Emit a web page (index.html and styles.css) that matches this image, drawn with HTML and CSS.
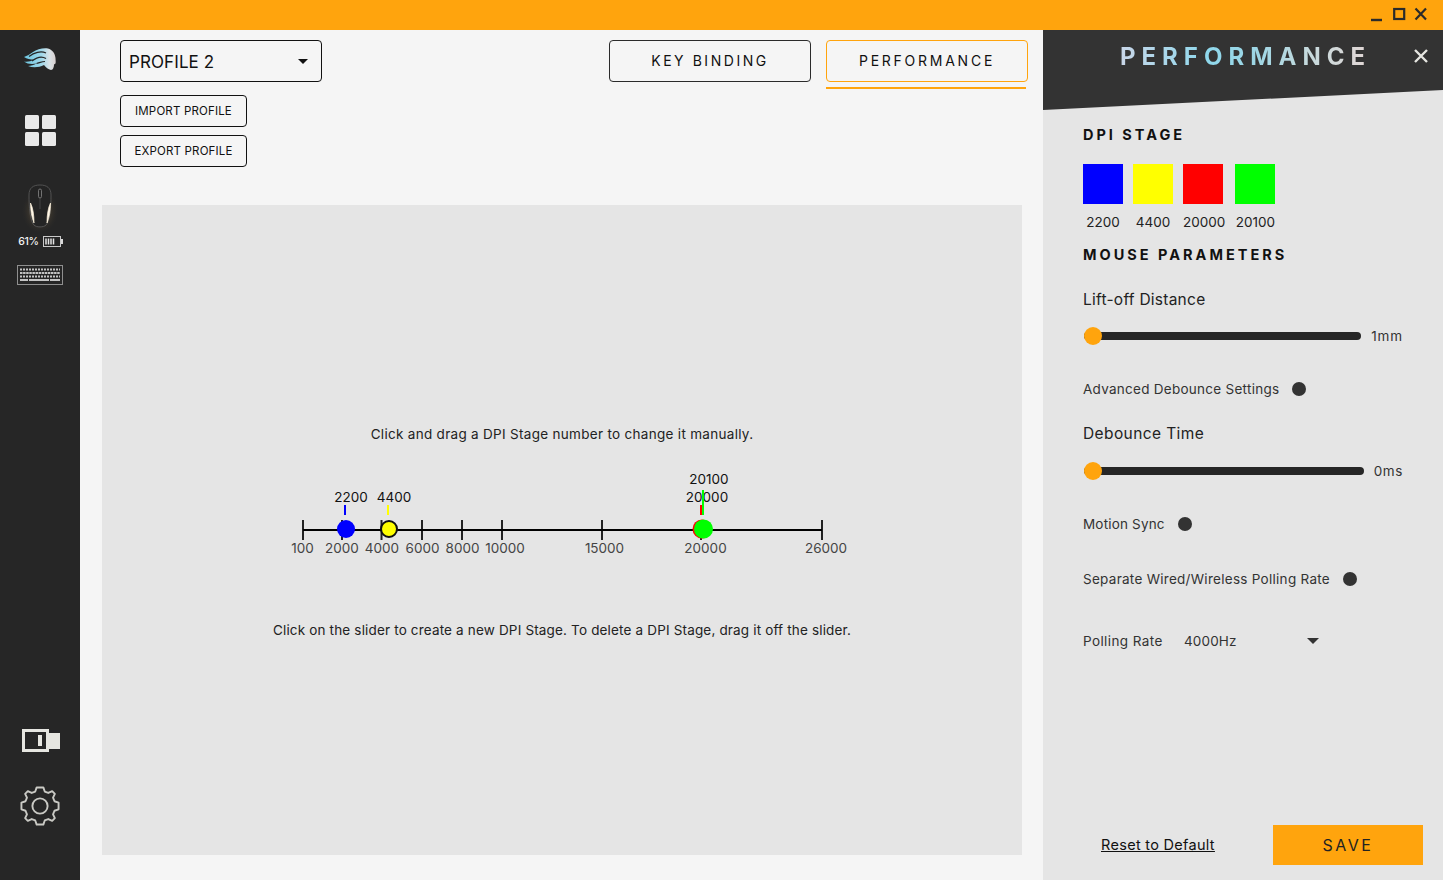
FILE: index.html
```html
<!DOCTYPE html>
<html lang="en">
<head>
<meta charset="utf-8">
<title>Performance</title>
<link rel="stylesheet" href="styles.css">
</head>
<body>
<div class="app">
  <header class="titlebar">
    <svg class="winctl" width="60" height="16" viewBox="0 0 60 16" aria-hidden="true">
      <path d="M0 14h11" stroke="#2b2b2b" stroke-width="2.4"/>
      <rect x="23.2" y="3" width="10" height="10" fill="none" stroke="#2b2b2b" stroke-width="2.2"/>
      <path d="M44.5 2.5l10.5 11M55 2.500l-10.500 11" stroke="#2b2b2b" stroke-width="2.200"/>
    </svg>
  </header>

  <nav class="sidebar">
    <svg class="logo" width="38" height="26" viewBox="20 45 38 26" aria-hidden="true">
      <defs>
        <linearGradient id="hair" x1="0" x2="1" y1="0" y2="0">
          <stop offset="0" stop-color="#6cc6e0"/>
          <stop offset="0.55" stop-color="#9fd8ea"/>
          <stop offset="0.8" stop-color="#d9e2e6"/>
          <stop offset="1" stop-color="#d8cfcf"/>
        </linearGradient>
      </defs>
      <path fill="url(#hair)" d="M23 56C26 55 29 53 32 51C36 48.500 42 46.500 47 47.500C51 48.500 54 52 54.500 57C54.500 59 55 61 54.500 62.500L53 63.500C53 66 52 69 50 69C47 68.500 45 66.500 43 64C38 66.500 32 67 27 65C30 65 33 64 35.500 62.500C31 63.500 26 63 23 60.500C26 61 30 60.500 33 58.500C29 58.500 26 58 23 56Z"/>
      <path fill="none" stroke="#262626" stroke-width="1.200" d="M28 55.500C33 51.500 40 49.500 45 52M31 60C36 56 41 55 45 57.500M35.500 62.500C38 62 41 60.500 44 60.500"/>
    </svg>

    <div class="tiles" aria-hidden="true"><i></i><i></i><i></i><i></i></div>

    <svg class="mouse" width="44" height="52" viewBox="18 179 44 52" aria-hidden="true">
      <defs>
        <radialGradient id="glow" cx="0.5" cy="0.55" r="0.5">
          <stop offset="0.5" stop-color="#5e5038" stop-opacity="0.45"/>
          <stop offset="1" stop-color="#262626" stop-opacity="0"/>
        </radialGradient>
      </defs>
      <ellipse cx="40" cy="208" rx="19" ry="23" fill="url(#glow)"/>
      <path d="M40 184C33 184 29 187 29 194C29 206 30 220 34 224C36 226.500 44 226.500 46 224C50 220 51 206 51 194C51 187 47 184 40 184Z" fill="#242424" stroke="#5d5d5d" stroke-width="0.800"/>
      <rect x="38.500" y="188" width="3" height="9" rx="1.500" fill="none" stroke="#7d7d7d" stroke-width="0.900"/>
      <path d="M40 197v11" stroke="#4d4d4d" stroke-width="0.800"/>
      <path d="M30.500 202C30.500 209 31.500 216 34 222C34 214 33 207 30.500 202Z" fill="#fff8ea" stroke="#fff3dc" stroke-width="0.700"/>
      <path d="M50.500 202C50.500 209 49.500 216 47 222C47 214 48 207 50.500 202Z" fill="#fff8ea" stroke="#fff3dc" stroke-width="0.700"/>
    </svg>

    <div class="battery">
      <span class="battery-pct">61%</span>
      <svg width="20" height="11" viewBox="0 0 20 11" aria-hidden="true">
        <rect x="0.500" y="0.500" width="17" height="10" fill="none" stroke="#c9c9c9"/>
        <rect x="18" y="3" width="2" height="5" fill="#d9d9d9"/>
        <path d="M3 2.500v6M5.500 2.500v6M8 2.500v6M10.500 2.500v6" stroke="#e4e4e4" stroke-width="1.500"/>
      </svg>
    </div>

    <svg class="keyboard" width="46" height="20" viewBox="0 0 46 20" aria-hidden="true">
      <rect x="0.500" y="0.500" width="45" height="19" fill="none" stroke="#8f8f8f"/>
      <g fill="none" stroke="#c4c4c4" stroke-width="2">
        <path d="M3 4.500h40" stroke-dasharray="2 1"/>
        <path d="M3 8h40" stroke-dasharray="2.500 .6"/>
        <path d="M3 11.500h40" stroke-dasharray="2 1"/>
        <path d="M3 15h8M12 15h20M33 15h10" />
      </g>
    </svg>

    <svg class="toggle" width="38" height="23" viewBox="0 0 38 23" aria-hidden="true">
      <rect x="1.500" y="1.500" width="24" height="20" fill="#262626" stroke="#e6e6e1" stroke-width="3"/>
      <rect x="26" y="4" width="12" height="16" fill="#e6e6e1"/>
      <rect x="16" y="6" width="4" height="11" fill="#e6e6e1"/>
    </svg>

    <svg class="gear" width="40" height="40" viewBox="-21 -21 42 42" aria-hidden="true">
      <g fill="none" stroke="#c9c9c4" stroke-width="2">
        <path d="M-3.500 -19.500L3.500 -19.500L5 -15.200L8.700 -13.700L12.800 -15.600L15.600 -12.800L13.700 -8.700L15.200 -5L19.500 -3.500L19.500 3.500L15.200 5L13.700 8.700L15.600 12.800L12.800 15.600L8.700 13.700L5 15.200L3.500 19.500L-3.500 19.500L-5 15.200L-8.700 13.700L-12.800 15.600L-15.600 12.800L-13.700 8.700L-15.200 5L-19.500 3.500L-19.500 -3.500L-15.200 -5L-13.700 -8.700L-15.600 -12.800L-12.800 -15.600L-8.700 -13.700L-5 -15.200Z" stroke-linejoin="round"/>
        <circle r="8"/>
      </g>
    </svg>
  </nav>

  <main class="main">
    <div class="toolbar">
      <div class="profiles">
        <div class="select"><span class="select-text">PROFILE 2</span><i class="caret"></i></div>
        <button class="small-btn">IMPORT PROFILE</button>
        <button class="small-btn">EXPORT PROFILE</button>
      </div>
      <div class="tabs">
        <button class="tab">KEY BINDING</button>
        <div class="tab-wrap">
          <button class="tab tab-active">PERFORMANCE</button>
          <div class="tab-line"></div>
        </div>
      </div>
    </div>

    <section class="chart-panel">
      <p class="caption">Click and drag a DPI Stage number to change it manually.</p>
      <svg class="chart" width="600" height="100" viewBox="262 460 600 100">
        <g class="chart-top">
          <text x="351" y="502">2200</text>
          <text x="394" y="502">4400</text>
          <text x="709" y="484">20100</text>
          <text x="707" y="502">20000</text>
        </g>
        <g stroke="#222" stroke-width="2">
          <path d="M303 520v20M342 520v20M381.500 520v20M422 520v20M462 520v20M502 520v20M602 520v20M701 520v20M822 520v20"/>
        </g>
        <path d="M303 530H822" stroke="#000" stroke-width="2"/>
        <path d="M345 505v10" stroke="#00f" stroke-width="2"/>
        <path d="M388 505v10" stroke="#ff0" stroke-width="2"/>
        <path d="M701 505v10" stroke="#f00" stroke-width="2"/>
        <path d="M703 490v25" stroke="#0f0" stroke-width="2"/>
        <circle cx="346" cy="529" r="9" fill="#00f"/>
        <circle cx="389" cy="529" r="8" fill="#ff0" stroke="#111" stroke-width="2"/>
        <circle cx="702" cy="529" r="9.500" fill="#f00"/>
        <circle cx="703.500" cy="529" r="9.500" fill="#0f0"/>
        <g class="chart-axis">
          <text x="302.500" y="553">100</text>
          <text x="342" y="553">2000</text>
          <text x="382" y="553">4000</text>
          <text x="422.500" y="553">6000</text>
          <text x="462.500" y="553">8000</text>
          <text x="505" y="553">10000</text>
          <text x="604.500" y="553">15000</text>
          <text x="705.500" y="553">20000</text>
          <text x="826" y="553">26000</text>
        </g>
      </svg>
      <p class="caption caption-low">Click on the slider to create a new DPI Stage. To delete a DPI Stage, drag it off the slider.</p>
    </section>
  </main>

  <aside class="panel">
    <div class="panel-head">
      <h1 class="panel-title">PERFORMANCE</h1>
      <svg class="panel-close" width="16" height="16" viewBox="0 0 16 16" aria-hidden="true">
        <path d="M2 2l12 12M14 2L2 14" stroke="#e6e6e1" stroke-width="2.400"/>
      </svg>
    </div>
    <div class="panel-body">
      <h2 class="heading">DPI STAGE</h2>
      <div class="stages">
        <div class="stage"><i class="swatch swatch-blue"></i><span>2200</span></div>
        <div class="stage"><i class="swatch swatch-yellow"></i><span>4400</span></div>
        <div class="stage"><i class="swatch swatch-red"></i><span>20000</span></div>
        <div class="stage"><i class="swatch swatch-green"></i><span>20100</span></div>
      </div>
      <h2 class="heading heading-params">MOUSE PARAMETERS</h2>

      <div class="param-title param-lift">Lift-off Distance</div>
      <div class="slider slider-lift"><div class="track"><i class="thumb"></i></div><span>1mm</span></div>

      <div class="switch-row row-adv"><span>Advanced Debounce Settings</span><i class="dot"></i></div>

      <div class="param-title param-deb">Debounce Time</div>
      <div class="slider slider-deb"><div class="track"><i class="thumb"></i></div><span>0ms</span></div>

      <div class="switch-row row-motion"><span>Motion Sync</span><i class="dot"></i></div>
      <div class="switch-row row-sep"><span>Separate Wired/Wireless Polling Rate</span><i class="dot"></i></div>

      <div class="polling">
        <span class="polling-label">Polling Rate</span>
        <span class="polling-value">4000Hz</span>
        <i class="caret caret-poll"></i>
      </div>

      <div class="footer">
        <a class="reset" href="#">Reset to Default</a>
        <button class="save">SAVE</button>
      </div>
    </div>
  </aside>
</div>
</body>
</html>
```

FILE: styles.css
```css
* { box-sizing: border-box; }
html, body { margin: 0; padding: 0; }
body { font-family: Inter, "Open Sans", "Liberation Sans", sans-serif; color: #222; background: #f5f5f5; }
button { font-family: inherit; cursor: pointer; background: none; color: #111; }
p, h1, h2 { margin: 0; }

.app {
  width: 1443px; height: 880px; overflow: hidden;
  display: grid;
  grid-template-columns: 80px 963px 400px;
  grid-template-rows: 30px 850px;
}

.titlebar {
  grid-column: 1 / -1;
  background: #ffa40d;
  display: flex; justify-content: flex-end; align-items: flex-start;
  padding: 6px 15px 0 0;
}
.winctl { margin-right: -3px; }

.sidebar {
  background: #262626;
  display: flex; flex-direction: column; align-items: center;
  padding: 16px 0 54px;
}
.logo { margin-left: -1px; }
.tiles {
  margin-top: 43px; width: 31px; height: 31px;
  display: grid; grid-template-columns: 14px 14px; grid-template-rows: 14px 14px; gap: 3px;
}
.tiles i { background: #e9e9e9; border-radius: 1.5px; }
.mouse { margin-top: 34px; }
.battery { display: flex; align-items: center; gap: 4px; margin-top: 3px; height: 12px; margin-left: 1px; }
.battery-pct { font-size: 10.5px; font-weight: 500; color: #f2f2f2; letter-spacing: -0.3px; }
.keyboard { margin-top: 18px; }
.toggle { margin-top: auto; margin-left: 1px; }
.gear { margin-top: 34px; }

.main { background: #f5f5f5; display: flex; flex-direction: column; }
.toolbar { display: flex; justify-content: space-between; height: 175px; padding: 10px 15px 0 40px; }
.profiles { display: flex; flex-direction: column; align-items: flex-start; }
.select {
  width: 202px; height: 42px; border: 1px solid #111; border-radius: 4px;
  display: flex; align-items: center; justify-content: space-between;
  padding: 0 13px 0 8px;
  font-size: 17px; color: #111;
  margin-bottom: 13px;
}
.select-text { letter-spacing: 0.1px; padding-top: 1px; }
.caret { width: 0; height: 0; border-left: 5.5px solid transparent; border-right: 5.5px solid transparent; border-top: 5.5px solid #111; }
.small-btn {
  width: 127px; height: 32px; border: 1px solid #111; border-radius: 4px;
  font-size: 11.5px; padding: 0; margin-bottom: 8px; letter-spacing: 0.17px;
}
.tabs { display: flex; gap: 15px; align-items: flex-start; }
.tab {
  width: 202px; height: 42px; border: 1px solid #2b2b2b; border-radius: 4px;
  font-size: 14px; letter-spacing: 2.55px; padding: 0 0 1px; background: none;
}
.tab-active { border-color: #ffa40d; display: block; letter-spacing: 2.75px; }
.tab-line { width: 200px; height: 2px; background: #ffa40d; margin-top: 5px; }

.chart-panel {
  width: 920px; height: 650px; margin-left: 22px; background: #e5e5e5;
  display: flex; flex-direction: column; align-items: center;
  padding-top: 221px;
}
.caption { font-size: 13.500px; line-height: 16px; color: #222; letter-spacing: 0.3px; }
.chart { display: block; margin-top: 18px; font-size: 13.500px; font-family: inherit; overflow: visible; }
.chart-top text { text-anchor: middle; fill: #111; }
.chart-axis text { text-anchor: middle; fill: #444; }
.caption-low { margin-top: 62px; letter-spacing: 0.165px; }

.panel { background: #e5e5e5; display: flex; flex-direction: column; }
.panel-head {
  height: 80px; background: #333;
  clip-path: polygon(0 0, 100% 0, 100% 60px, 0 100%);
  display: flex; justify-content: center;
  padding: 13px 0 0 5px; position: relative;
}
.panel-title {
  font-size: 24px; font-weight: 700; letter-spacing: 6px; line-height: 28px; height: 28px;
  background: linear-gradient(90deg, #c9d6e8 0%, #8fd8ec 35%, #9fd6e4 55%, #c6dadd 75%, #e2d6d4 100%);
  -webkit-background-clip: text; background-clip: text; color: transparent;
}
.panel-close { position: absolute; right: 14px; top: 18px; }

.panel-body { flex: 1; display: flex; flex-direction: column; align-items: flex-start; padding: 15px 40px 15px 40px; color: #222; }
.heading { font-size: 14.500px; font-weight: 700; letter-spacing: 3px; line-height: 20px; color: #111; }
.stages { display: flex; gap: 10px; margin-top: 19px; }
.stage { min-width: 40px; display: flex; flex-direction: column; }
.stage span { display: block; margin-top: 10px; font-size: 13.500px; line-height: 16px; text-align: center; color: #222; }
.swatch { display: block; width: 40px; height: 40px; }
.swatch-blue { background: #00f; }
.swatch-yellow { background: #ff0; }
.swatch-red { background: #f00; }
.swatch-green { background: #0f0; }
.heading-params { margin-top: 15px; }

.param-title { font-size: 15.500px; line-height: 20px; color: #222; }
.param-lift { margin-top: 25px; letter-spacing: 0.25px; }
.param-deb { margin-top: 27px; letter-spacing: 0.4px; }
.slider { width: 320px; height: 18px; display: flex; align-items: center; justify-content: space-between; font-size: 13.500px; color: #333; }
.slider-lift { margin-top: 17px; letter-spacing: 0.9px; }
.slider-deb { margin-top: 18px; letter-spacing: 0.6px; }
.track { height: 8px; background: #262626; border-radius: 4px; position: relative; }
.slider-lift .track { width: 277px; margin-left: 1px; }
.slider-deb .track { width: 280px; margin-left: 1px; }
.thumb { position: absolute; left: 0; top: -5px; width: 18px; height: 18px; border-radius: 50%; background: #ffa40d; }

.switch-row { display: flex; align-items: center; gap: 13px; height: 16px; font-size: 13.500px; color: #333; }
.dot { display: block; width: 14px; height: 14px; border-radius: 50%; background: #333; }
.row-adv { margin-top: 36px; letter-spacing: 0.27px; }
.row-motion { margin-top: 36px; letter-spacing: 0.18px; }
.row-sep { margin-top: 39px; letter-spacing: 0.28px; }

.polling { margin-top: 46px; width: 236px; height: 16px; display: flex; align-items: center; font-size: 13.500px; color: #333; }
.polling-label { width: 101px; letter-spacing: 0.4px; }
.polling-value { flex: 1; letter-spacing: 0.15px; }
.caret-poll { border-left-width: 6.500px; border-right-width: 6.500px; border-top-width: 6px; border-top-color: #333; }

.footer { margin-top: auto; width: 340px; display: flex; align-items: center; justify-content: space-between; padding-left: 18px; }
.reset { font-size: 14.500px; color: #111; text-decoration: underline; letter-spacing: 0.3px; margin-top: -1px; }
.save { width: 150px; height: 40px; border: 0; background: #ffa40d; font-size: 16px; letter-spacing: 2.500px; color: #222; padding: 0; }
```
